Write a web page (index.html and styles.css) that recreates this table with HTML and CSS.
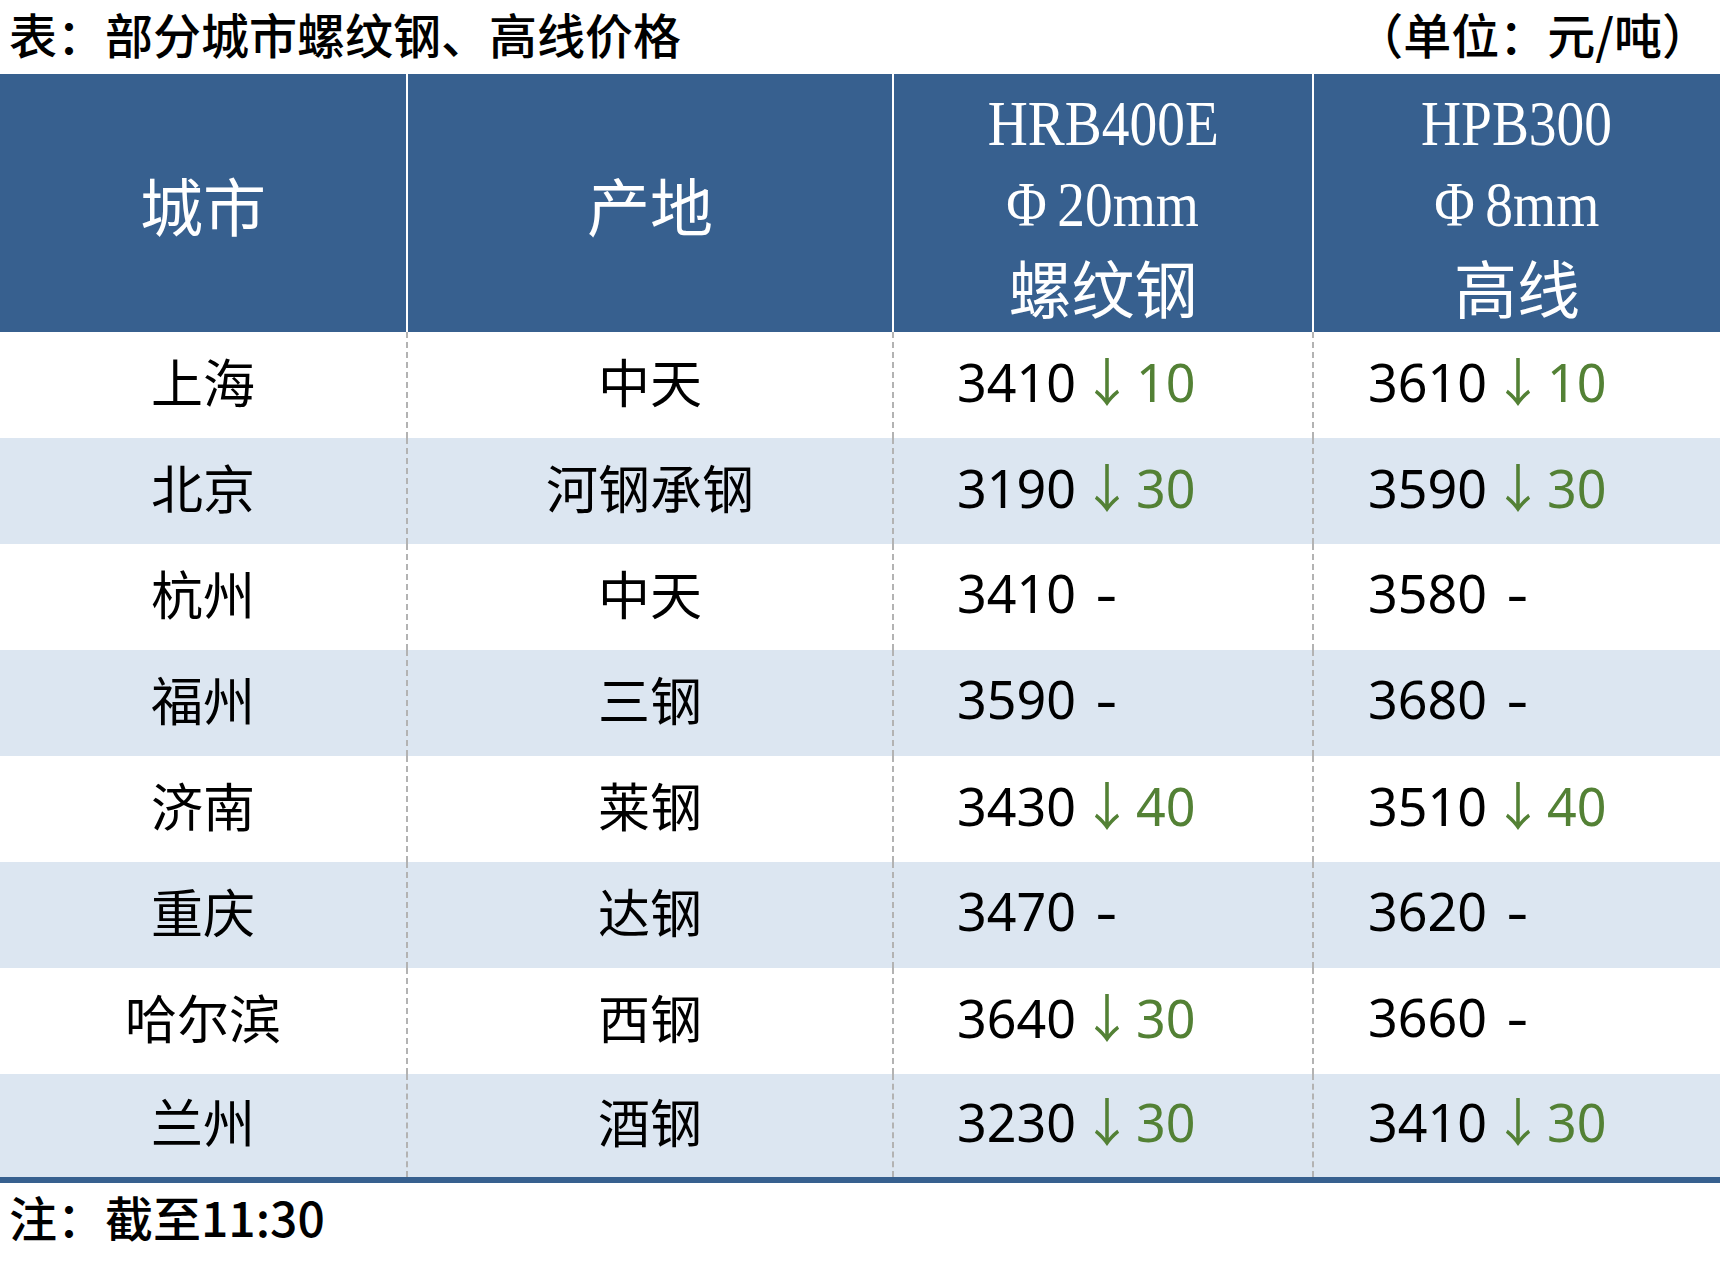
FILE: index.html
```html
<!DOCTYPE html>
<html lang="zh-CN">
<head>
<meta charset="utf-8">
<title>部分城市螺纹钢、高线价格</title>
<link rel="stylesheet" href="styles.css">
</head>
<body>
<div class="page">
  <div class="caption">
    <span class="caption-title">表：部分城市螺纹钢、高线价格</span>
    <span class="caption-unit">（单位：元/吨）</span>
  </div>
  <table class="price">
    <colgroup>
      <col class="c-city">
      <col class="c-origin">
      <col class="c-rebar">
      <col class="c-wire">
    </colgroup>
    <thead>
      <tr>
        <th class="h-single">城市</th>
        <th class="h-single">产地</th>
        <th class="h-multi">
          <div class="hl"><span class="lat">HRB400E</span></div>
          <div class="hl"><span class="lat"><span class="phi">Φ</span>20mm</span></div>
          <div class="hl">螺纹钢</div>
        </th>
        <th class="h-multi">
          <div class="hl"><span class="lat">HPB300</span></div>
          <div class="hl"><span class="lat"><span class="phi">Φ</span>8mm</span></div>
          <div class="hl">高线</div>
        </th>
      </tr>
    </thead>
    <tbody>
      <tr>
        <td class="name">上海</td><td class="name">中天</td>
        <td class="val v3">3410<span class="dn"><span class="arr">↓</span>10</span></td>
        <td class="val v4">3610<span class="dn"><span class="arr">↓</span>10</span></td>
      </tr>
      <tr class="alt">
        <td class="name">北京</td><td class="name">河钢承钢</td>
        <td class="val v3">3190<span class="dn"><span class="arr">↓</span>30</span></td>
        <td class="val v4">3590<span class="dn"><span class="arr">↓</span>30</span></td>
      </tr>
      <tr>
        <td class="name">杭州</td><td class="name">中天</td>
        <td class="val v3">3410 <span class="nc">-</span></td>
        <td class="val v4">3580 <span class="nc">-</span></td>
      </tr>
      <tr class="alt">
        <td class="name">福州</td><td class="name">三钢</td>
        <td class="val v3">3590 <span class="nc">-</span></td>
        <td class="val v4">3680 <span class="nc">-</span></td>
      </tr>
      <tr>
        <td class="name">济南</td><td class="name">莱钢</td>
        <td class="val v3">3430<span class="dn"><span class="arr">↓</span>40</span></td>
        <td class="val v4">3510<span class="dn"><span class="arr">↓</span>40</span></td>
      </tr>
      <tr class="alt">
        <td class="name">重庆</td><td class="name">达钢</td>
        <td class="val v3">3470 <span class="nc">-</span></td>
        <td class="val v4">3620 <span class="nc">-</span></td>
      </tr>
      <tr>
        <td class="name">哈尔滨</td><td class="name">西钢</td>
        <td class="val v3">3640<span class="dn"><span class="arr">↓</span>30</span></td>
        <td class="val v4">3660 <span class="nc">-</span></td>
      </tr>
      <tr class="alt last">
        <td class="name">兰州</td><td class="name">酒钢</td>
        <td class="val v3">3230<span class="dn"><span class="arr">↓</span>30</span></td>
        <td class="val v4">3410<span class="dn"><span class="arr">↓</span>30</span></td>
      </tr>
    </tbody>
  </table>
  <div class="note">注：截至11:30</div>
</div>
</body>
</html>
```
FILE: styles.css
```css
html, body {
  margin: 0;
  padding: 0;
  background: #ffffff;
}

body {
  font-family: "Noto Sans CJK SC", "Noto Sans", sans-serif;
  color: #000000;
}

.page {
  width: 1720px;
}

.caption {
  height: 74px;
  box-sizing: border-box;
  display: flex;
  align-items: center;
  justify-content: space-between;
  padding: 0 10px 8px 9px;
  font-size: 48px;
  font-weight: 500;
  line-height: 1;
}

.price {
  width: 1720px;
  border-collapse: collapse;
  table-layout: fixed;
}

.c-city { width: 407px; }
.c-origin { width: 486px; }
.c-rebar { width: 420px; }
.c-wire { width: 407px; }

.price thead th {
  background: #37608f;
  color: #ffffff;
  font-weight: 400;
  font-size: 63px;
  padding: 0;
  vertical-align: middle;
  text-align: center;
}

.price thead th + th {
  border-left: 2px solid #ffffff;
}

.h-multi {
  padding: 9px 0 6px !important;
}

.hl {
  height: 81px;
  line-height: 81px;
  white-space: nowrap;
}

.lat {
  display: inline-block;
  vertical-align: 6px;
  font-family: "Liberation Serif", "Times New Roman", serif;
  font-size: 63px;
  transform: scaleX(0.88);
}

.phi {
  margin-right: 12px;
}

.price tbody tr {
  height: 106px;
}

.price tbody td {
  padding: 0 0 8px;
  font-size: 52px;
  line-height: 1.2;
  vertical-align: middle;
  white-space: nowrap;
}

.price tbody td + td {
  border-left: 2px dashed #b3b3b3;
}

.price tbody tr.alt td {
  background: #dce6f1;
}

.price tbody tr.last td {
  border-bottom: 6px solid #37608f;
}

.name {
  text-align: center;
}

.val {
  text-align: left;
  font-family: "Noto Sans", "Noto Sans CJK SC", sans-serif;
}

.v3 {
  padding-left: 63px !important;
}

.v4 {
  padding-left: 54px !important;
}

.dn {
  color: #538135;
}

.arr {
  font-family: "Noto Sans CJK SC", sans-serif;
  margin: 0 3px 0 5px;
}

.nc {
  display: inline-block;
  margin-left: 8px;
  transform: scaleX(1.3);
}

.note {
  height: 72px;
  box-sizing: border-box;
  display: flex;
  align-items: center;
  padding: 0 0 6px 9px;
  font-size: 48px;
  font-weight: 500;
  line-height: 1;
}
```
